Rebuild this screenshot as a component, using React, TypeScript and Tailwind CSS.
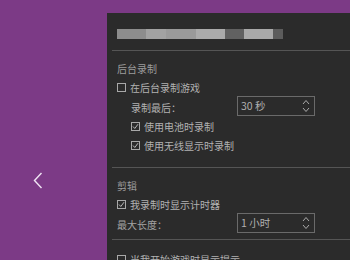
import React from "react";

const font = { fontFamily: '"Noto Sans CJK SC", "Noto Sans", sans-serif' };

function Box({ checked }: { checked?: boolean }) {
  return (
    <svg width="9" height="9" viewBox="0 0 9 9" className="shrink-0">
      <rect x="0.5" y="0.5" width="8" height="8" fill="none" stroke="#a8a8a8" strokeWidth="1" />
      {checked && <path d="M2 4.5 L3.8 6.5 L7 2.2" fill="none" stroke="#b8b8b8" strokeWidth="1" />}
    </svg>
  );
}

function Spinner() {
  return (
    <svg width="10" height="16" viewBox="0 0 10 16" className="shrink-0">
      <path d="M2 6 L5 2.5 L8 6" fill="none" stroke="#aaaaaa" strokeWidth="1" />
      <path d="M2 10 L5 13.5 L8 10" fill="none" stroke="#aaaaaa" strokeWidth="1" />
    </svg>
  );
}

function Select({ value }: { value: string }) {
  return (
    <div className="w-[78px] h-[20px] shrink-0 border border-[#6a6a6a] flex items-center justify-between pl-[3px] pr-[3px] text-[10.5px] leading-none text-[#b0b0b0]">
      <span>{value}</span>
      <Spinner />
    </div>
  );
}

function Sep() {
  return <div className="ml-[5px] h-px bg-[#555555]" />;
}

export default function App() {
  const blocks: [number, string][] = [
    [29, "#8d8d8d"],
    [20, "#a2a2a2"],
    [30, "#9a9a9a"],
    [29, "#ababab"],
    [19, "#616161"],
    [29, "#a9a9a9"],
    [10, "#5c5c5c"],
  ];
  return (
    <div className="w-[350px] h-[260px] bg-[#7c3a86] flex overflow-hidden" style={font}>
      <div className="w-[107px] shrink-0 flex pt-[172px] pl-[33px]">
        <svg width="10" height="17" viewBox="0 0 10 17">
          <path d="M8.5 1 L1.5 8.5 L8.5 16" fill="none" stroke="#f0e4f4" strokeWidth="1.4" />
        </svg>
      </div>
      <div className="flex-1 mt-[13px] bg-[#2b2b2b] flex flex-col overflow-hidden text-[10px] text-[#b2b2b2]">
        <div className="shrink-0 mt-[16px] ml-[10px] h-[10px] flex">
          {blocks.map(([w, c], i) => (
            <div key={i} style={{ width: w, background: c }} className="h-full" />
          ))}
        </div>
        <div className="shrink-0 mt-[11px]">
          <Sep />
        </div>
        <div className="shrink-0 mt-[8px] h-[18px] pl-[10px] flex items-center text-[#9c9c9c]">后台录制</div>
        <div className="shrink-0 mt-[1px] h-[18px] pl-[10px] flex items-center gap-[4px]">
          <Box />
          <span>在后台录制游戏</span>
        </div>
        <div className="shrink-0 h-[20px] pl-[24px] flex items-start">
          <span className="w-[106px] mt-[5px] leading-[13px]">录制最后：</span>
          <Select value="30 秒" />
        </div>
        <div className="shrink-0 mt-[1px] h-[19px] pl-[24px] flex items-center gap-[4px]">
          <Box checked />
          <span>使用电池时录制</span>
        </div>
        <div className="shrink-0 h-[19px] pl-[24px] flex items-center gap-[4px]">
          <Box checked />
          <span>使用无线显示时录制</span>
        </div>
        <div className="shrink-0 mt-[12px]">
          <Sep />
        </div>
        <div className="shrink-0 mt-[8px] h-[18px] pl-[10px] flex items-center text-[#9c9c9c]">剪辑</div>
        <div className="shrink-0 mt-[1px] h-[18px] pl-[10px] flex items-center gap-[4px]">
          <Box checked />
          <span>我录制时显示计时器</span>
        </div>
        <div className="shrink-0 h-[20px] pl-[10px] flex items-start">
          <span className="w-[120px] mt-[5px] leading-[13px] text-[#a4a4a4]">最大长度：</span>
          <Select value="1 小时" />
        </div>
        <div className="shrink-0 mt-[6px]">
          <Sep />
        </div>
        <div className="shrink-0 mt-[10px] h-[18px] pl-[10px] flex items-center gap-[4px]">
          <Box />
          <span>当我开始游戏时显示提示</span>
        </div>
      </div>
    </div>
  );
}
